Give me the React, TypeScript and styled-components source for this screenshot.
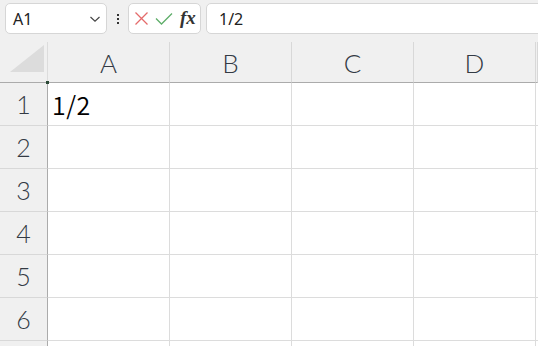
import React from 'react'
import styled, { createGlobalStyle } from 'styled-components'

const columns = ['A', 'B', 'C', 'D']
const rows = [1, 2, 3, 4, 5, 6, 7]
const cells: Record<string, string> = { A1: '1/2' }

const GlobalStyle = createGlobalStyle`
    html, body {
        margin: 0;
        padding: 0;
        background: #ffffff;
    }
    body {
        font-family: 'Noto Sans CJK JP', 'Noto Sans', sans-serif;
    }
`

function App() {
    return (
        <>
            <GlobalStyle />
            <Frame>
                <Toolbar>
                    <NameBox>
                        <NameText>A1</NameText>
                        <svg width='12' height='8' viewBox='0 0 12 8'>
                            <path d='M1.5 2 L6 6.2 L10.5 2' fill='none' stroke='#444' strokeWidth='1.2' />
                        </svg>
                    </NameBox>
                    <MoreDots>
                        <Dot />
                        <Dot />
                        <Dot />
                    </MoreDots>
                    <FormulaButtons>
                        <svg width='15' height='15' viewBox='0 0 15 15'>
                            <path d='M1.5 1.5 L13.5 13.5 M13.5 1.5 L1.5 13.5' stroke='#e46b6b' strokeWidth='1.3' />
                        </svg>
                        <svg width='18' height='13' viewBox='0 0 18 13'>
                            <path d='M1 6.5 L6.5 12 L17 1.5' fill='none' stroke='#5fae6a' strokeWidth='1.3' />
                        </svg>
                        <FxLabel>fx</FxLabel>
                    </FormulaButtons>
                    <FormulaInput>1/2</FormulaInput>
                </Toolbar>
                <Sheet>
                    <CornerCell>
                        <svg width='34' height='27' viewBox='0 0 34 27'>
                            <polygon points='0,27 34,27 34,0' fill='#dcdcdc' />
                        </svg>
                    </CornerCell>
                    {columns.map((col) => (
                        <ColumnHeader key={col}>{col}</ColumnHeader>
                    ))}
                    <ColumnHeader />
                    {rows.map((row) => (
                        <React.Fragment key={row}>
                            <RowHeader>{row < 7 ? row : ''}</RowHeader>
                            {columns.map((col) => (
                                <Cell key={col + row}>
                                    {col + row === 'A1' && <SelectionDot />}
                                    {cells[col + row]}
                                </Cell>
                            ))}
                            <Cell />
                        </React.Fragment>
                    ))}
                </Sheet>
            </Frame>
        </>
    )
}

const Frame = styled.div`
    width: 538px;
    height: 346px;
    overflow: hidden;
    background: #f0f0f0;
`

const Toolbar = styled.div`
    display: flex;
    align-items: flex-start;
    height: 42px;
    padding: 3px 0 0 5px;
    box-sizing: border-box;
    background: #f0f0f0;
`

const Box = styled.div`
    display: flex;
    align-items: center;
    height: 31px;
    box-sizing: border-box;
    background: #ffffff;
    border: 1px solid #d6d6d6;
    border-radius: 5px;
`

const NameBox = styled(Box)`
    width: 102px;
    justify-content: space-between;
    padding: 0 5px 0 7px;
`

const NameText = styled.span`
    font-family: 'Noto Sans', sans-serif;
    font-size: 16px;
    color: #222;
`

const MoreDots = styled.div`
    width: 21px;
    height: 31px;
    display: flex;
    flex-direction: column;
    align-items: center;
    justify-content: center;
    gap: 2px;
`

const Dot = styled.span`
    width: 2px;
    height: 2px;
    background: #333;
`

const FormulaButtons = styled(Box)`
    width: 73px;
    gap: 6px;
    padding: 0 0 0 5px;
`

const FxLabel = styled.span`
    font-family: 'Liberation Serif', serif;
    font-style: italic;
    font-weight: bold;
    font-size: 19px;
    color: #333;
    margin-left: 1px;
    margin-top: -2px;
`

const FormulaInput = styled(Box)`
    flex: 1;
    margin: 0 -10px 0 5px;
    padding-left: 12px;
    font-family: 'Noto Sans', sans-serif;
    font-size: 16px;
    color: #222;
`

const Sheet = styled.div`
    display: grid;
    grid-template-columns: 48px repeat(4, 122px) 2px;
    grid-template-rows: 41px repeat(7, 43px);
    background: #ffffff;
`

const HeaderBase = styled.div`
    display: flex;
    align-items: center;
    justify-content: center;
    box-sizing: border-box;
    background: #f0f0f0;
    font-family: 'Lato', 'Noto Sans', sans-serif;
    font-weight: 300;
    color: #333a44;
`

const CornerCell = styled(HeaderBase)`
    align-items: flex-end;
    justify-content: flex-end;
    padding: 0 3px 10px 0;
    border-right: 1px solid #dcdcdc;
    border-bottom: 1px solid #ababab;
`

const ColumnHeader = styled(HeaderBase)`
    font-size: 26px;
    padding-top: 2px;
    border-right: 1px solid #d8d8d8;
    border-bottom: 1px solid #ababab;
`

const RowHeader = styled(HeaderBase)`
    font-size: 25px;
    border-right: 1px solid #ababab;
    border-bottom: 1px solid #d8d8d8;
`

const Cell = styled.div`
    position: relative;
    display: flex;
    align-items: center;
    box-sizing: border-box;
    padding: 0 0 1px 4px;
    border-right: 1px solid #dcdcdc;
    border-bottom: 1px solid #dcdcdc;
    font-family: 'Noto Sans CJK JP', 'Noto Sans', sans-serif;
    font-weight: 350;
    font-size: 25px;
    letter-spacing: 0.5px;
    color: #000;
`

const SelectionDot = styled.span`
    position: absolute;
    top: -2px;
    left: -2px;
    width: 3px;
    height: 3px;
    background: #2b4a36;
`

export default App
